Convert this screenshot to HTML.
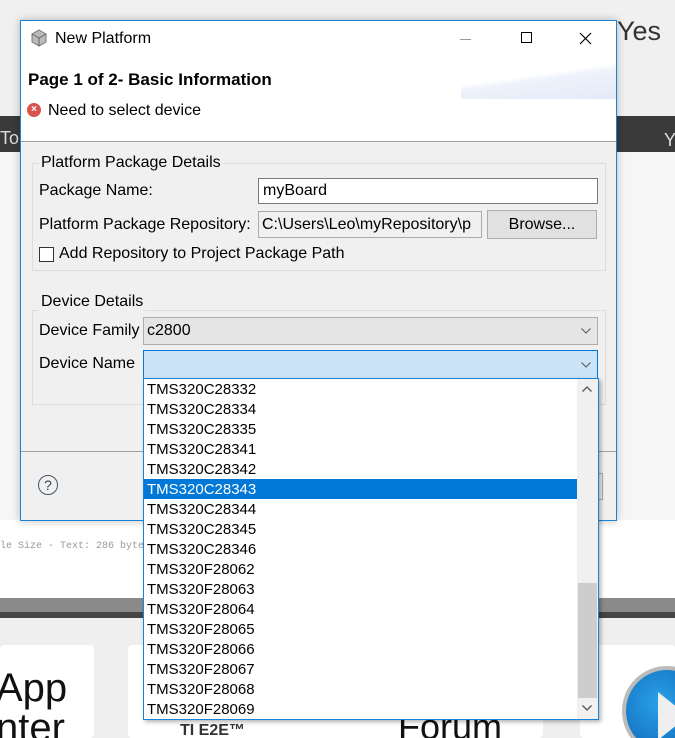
<!DOCTYPE html>
<html><head><style>
*{margin:0;padding:0;box-sizing:border-box}
html,body{width:675px;height:738px;overflow:hidden}
body{position:relative;background:#f0f0f0;font-family:"Liberation Sans",sans-serif;font-size:16px;color:#000}
.a{position:absolute}
.row{position:absolute;left:3px;height:20px;line-height:21px;font-size:15px}
</style></head><body>
<!-- background -->
<div class="a" style="left:0;top:0;width:675px;height:118px;background:#f0f0f0"></div>
<div class="a" style="left:617px;top:16px;font-size:27px;color:#333">Yes</div>
<div class="a" style="left:0;top:116px;width:675px;height:36px;background:#3a3a3a"></div>
<div class="a" style="left:0;top:128px;color:#ddd;font-size:18px">To</div>
<div class="a" style="left:664px;top:130px;color:#ddd;font-size:18px">Y</div>
<div class="a" style="left:0;top:152px;width:675px;height:448px;background:#f6f6f6"></div>
<div class="a" style="left:0;top:520px;width:675px;height:80px;background:#fff"></div>
<div class="a" style="left:0;top:541px;font-size:10px;color:#999;font-family:'Liberation Mono',monospace">le Size - Text: 286 bytes</div>
<div class="a" style="left:0;top:598px;width:675px;height:14px;background:#8a8a8a"></div>
<div class="a" style="left:0;top:612px;width:675px;height:6px;background:#444"></div>
<div class="a" style="left:0;top:618px;width:675px;height:120px;background:#efefef"></div>
<div class="a" style="left:0;top:645px;width:94px;height:93px;background:#fff;border-radius:4px"></div>
<div class="a" style="left:-4px;top:668px;font-size:40px;line-height:40px;color:#111">App<br>nter</div>
<div class="a" style="left:128px;top:645px;width:415px;height:93px;background:#fff;border-radius:4px"></div>
<div class="a" style="left:180px;top:722px;font-size:16px;font-weight:bold;color:#333">TI E2E™</div>
<div class="a" style="left:398px;top:706px;font-size:36px;color:#111">Forum</div>
<div class="a" style="left:580px;top:645px;width:95px;height:93px;background:#fff;border-radius:4px"></div>
<div class="a" style="left:622px;top:666px;width:90px;height:90px;border-radius:50%;background:radial-gradient(circle at 40% 40%,#2aa0e8,#0a5fb0);border:4px solid #bbb"></div>
<div class="a" style="left:658px;top:692px;width:0;height:0;border-top:24px solid transparent;border-bottom:24px solid transparent;border-left:30px solid #eee"></div>

<!-- dialog -->
<div class="a" style="left:20px;top:20px;width:597px;height:501px;border:1px solid #1883d7;background:#f0f0f0;box-shadow:0 0 8px rgba(0,0,0,.25)">
  <div class="a" style="left:0;top:0;width:595px;height:121px;background:#fff;border-bottom:1px solid #a0a0a0"></div>
  <div class="a" style="left:440px;top:38px;width:155px;height:40px;background:linear-gradient(172deg,#fff 42%,#eef2fb 52%,#e3eaf8)"></div>
  <svg class="a" style="left:9px;top:8px" width="18" height="18" viewBox="0 0 18 18"><path d="M9 1 L16 5 L16 13 L9 17 L2 13 L2 5Z" fill="#bbb" stroke="#777"/><path d="M2 5 L9 9 L16 5 M9 9 L9 17" stroke="#666" fill="none"/></svg>
  <div class="a" style="left:34px;top:9px;font-size:16px">New Platform</div>
  <div class="a" style="left:439px;top:18px;width:11px;height:1px;background:#999"></div>
  <div class="a" style="left:500px;top:11px;width:11px;height:11px;border:1px solid #000"></div>
  <svg class="a" style="left:558px;top:11px" width="13" height="13"><path d="M1 1L12 12M12 1L1 12" stroke="#000" stroke-width="1.2"/></svg>
  <div class="a" style="left:7px;top:49px;font-weight:bold;font-size:17px">Page 1 of 2- Basic Information</div>
  <div class="a" style="left:6px;top:82px;width:14px;height:14px;border-radius:50%;background:#d9534f;color:#fff;font-size:10px;line-height:14px;text-align:center;font-weight:bold">×</div>
  <div class="a" style="left:27px;top:81px">Need to select device</div>

  <!-- group 1 -->
  <div class="a" style="left:11px;top:142px;width:574px;height:108px;border:1px solid #dcdcdc"></div>
  <div class="a" style="left:18px;top:133px;background:#f0f0f0;padding:0 2px">Platform Package Details</div>
  <div class="a" style="left:18px;top:161px">Package Name:</div>
  <div class="a" style="left:237px;top:157px;width:340px;height:26px;background:#fff;border:1px solid #7a7a7a;padding:3px 4px">myBoard</div>
  <div class="a" style="left:18px;top:195px">Platform Package Repository:</div>
  <div class="a" style="left:237px;top:190px;width:224px;height:27px;background:#f0f0f0;border:1px solid #aaa;padding:4px 3px;overflow:hidden;white-space:nowrap">C:\Users\Leo\myRepository\p</div>
  <div class="a" style="left:466px;top:189px;width:110px;height:29px;background:#e1e1e1;border:1px solid #adadad;text-align:center;line-height:27px">Browse...</div>
  <div class="a" style="left:18px;top:226px;width:15px;height:15px;border:1px solid #333;background:#fff"></div>
  <div class="a" style="left:38px;top:224px">Add Repository to Project Package Path</div>

  <!-- group 2 -->
  <div class="a" style="left:11px;top:289px;width:574px;height:95px;border:1px solid #dcdcdc"></div>
  <div class="a" style="left:18px;top:272px;background:#f0f0f0;padding:0 2px">Device Details</div>
  <div class="a" style="left:18px;top:301px">Device Family</div>
  <div class="a" style="left:122px;top:296px;width:455px;height:28px;background:#e5e5e5;border:1px solid #adadad;padding:4px 3px">c2800</div>
  <svg class="a" style="left:560px;top:307px" width="10" height="6"><path d="M0.5 0.5L5 5L9.5 0.5" stroke="#555" fill="none"/></svg>
  <div class="a" style="left:18px;top:334px">Device Name</div>
  <div class="a" style="left:122px;top:329px;width:455px;height:29px;background:#cce4f7;border:1px solid #0078d7"></div>
  <svg class="a" style="left:560px;top:341px" width="10" height="6"><path d="M0.5 0.5L5 5L9.5 0.5" stroke="#555" fill="none"/></svg>

  <div class="a" style="left:0;top:430px;width:595px;height:1px;background:#a0a0a0"></div>
  <div class="a" style="left:17px;top:454px;width:20px;height:20px;border:1.5px solid #456;border-radius:50%;text-align:center;line-height:18px;font-size:14px;color:#345">?</div>
  <div class="a" style="left:560px;top:452px;width:22px;height:27px;border:1px solid #adadad;border-left:none"></div>
</div>

<!-- dropdown list -->
<div class="a" style="left:143px;top:378px;width:456px;height:342px;background:#fff;border:1px solid #1883d7;box-shadow:2px 2px 4px rgba(0,0,0,.3);overflow:hidden">
  <div class="a" style="left:0;top:100px;width:433px;height:20px;background:#0078d7"></div>
  <div class="row" style="top:0">TMS320C28332</div>
  <div class="row" style="top:20px">TMS320C28334</div>
  <div class="row" style="top:40px">TMS320C28335</div>
  <div class="row" style="top:60px">TMS320C28341</div>
  <div class="row" style="top:80px">TMS320C28342</div>
  <div class="row" style="top:100px;color:#fff">TMS320C28343</div>
  <div class="row" style="top:120px">TMS320C28344</div>
  <div class="row" style="top:140px">TMS320C28345</div>
  <div class="row" style="top:160px">TMS320C28346</div>
  <div class="row" style="top:180px">TMS320F28062</div>
  <div class="row" style="top:200px">TMS320F28063</div>
  <div class="row" style="top:220px">TMS320F28064</div>
  <div class="row" style="top:240px">TMS320F28065</div>
  <div class="row" style="top:260px">TMS320F28066</div>
  <div class="row" style="top:280px">TMS320F28067</div>
  <div class="row" style="top:300px">TMS320F28068</div>
  <div class="row" style="top:320px">TMS320F28069</div>
  <div class="a" style="left:433px;top:0;width:21px;height:340px;background:#f0f0f0"></div>
  <div class="a" style="left:434px;top:204px;width:19px;height:115px;background:#cdcdcd"></div>
  <svg class="a" style="left:438px;top:7px" width="10" height="6"><path d="M0.5 5.5L5 1L9.5 5.5" stroke="#555" stroke-width="1.3" fill="none"/></svg>
  <svg class="a" style="left:438px;top:326px" width="10" height="6"><path d="M0.5 0.5L5 5L9.5 0.5" stroke="#555" stroke-width="1.3" fill="none"/></svg>
</div>
</body></html>
